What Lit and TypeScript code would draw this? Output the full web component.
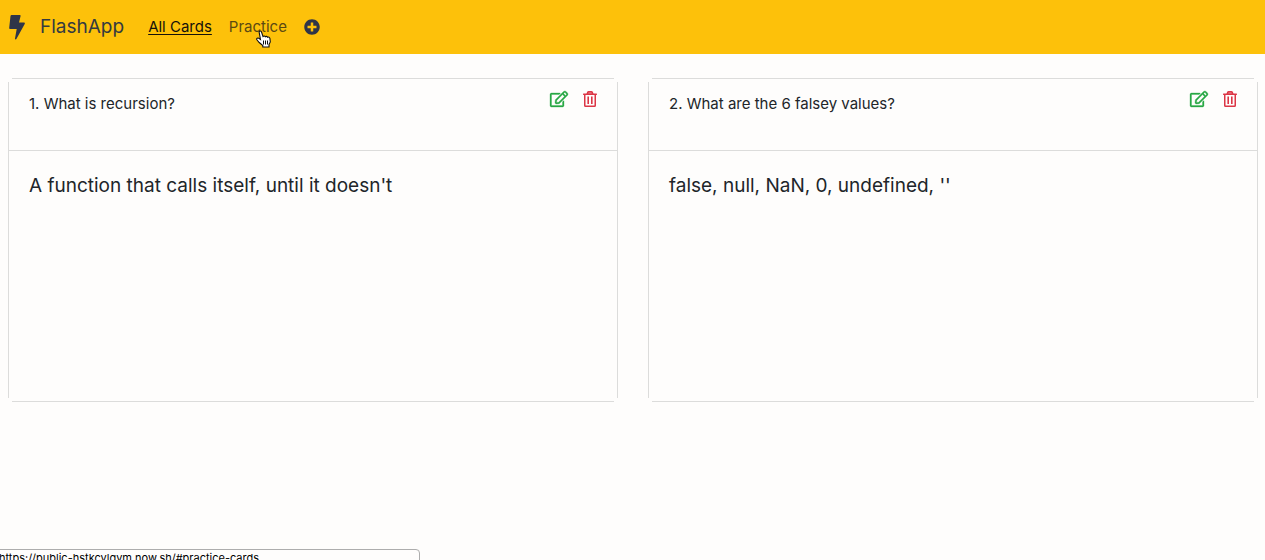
import { LitElement, html, css } from "lit";
import { customElement, property, state } from "lit/decorators.js";

interface Card {
  question: string;
  answer: string;
}

const boltIcon = html`<svg class="bolt" viewBox="0 0 16 26" aria-hidden="true">
  <path d="M2.600 1h8.100c.7 0 1.100.5.9 1.100L10 8.500h4.900c.8 0 1.200.8.8 1.500L7.400 25c-.4.7-1.600.4-1.400-.5l1.700-9.500H1.300c-.7 0-1.200-.5-1.100-1.200L1.500 1.900C1.600 1.400 2 1 2.600 1z"/>
</svg>`;

const plusIcon = html`<svg class="plus" viewBox="0 0 512 512" aria-hidden="true">
  <path d="M256 8C119 8 8 119 8 256s111 248 248 248 248-111 248-248S393 8 256 8zm144 276c0 6.600-5.400 12-12 12h-92v92c0 6.600-5.400 12-12 12h-56c-6.600 0-12-5.400-12-12v-92h-92c-6.600 0-12-5.400-12-12v-56c0-6.600 5.400-12 12-12h92v-92c0-6.600 5.400-12 12-12h56c6.600 0 12 5.400 12 12v92h92c6.600 0 12 5.400 12 12v56z"/>
</svg>`;

const editIcon = html`<svg class="edit-icon" viewBox="0 0 576 512" aria-hidden="true">
  <path d="M402.3 344.9l32-32c5-5 13.7-1.5 13.7 5.7V464c0 26.5-21.5 48-48 48H48c-26.5 0-48-21.5-48-48V112c0-26.5 21.5-48 48-48h273.5c7.1 0 10.7 8.6 5.7 13.7l-32 32c-1.5 1.5-3.5 2.3-5.7 2.3H48v352h352V350.5c0-2.1.8-4.1 2.3-5.6zm156.6-201.8L296.3 405.7l-90.4 10c-26.2 2.9-48.5-19.2-45.6-45.6l10-90.4L432.900 17.100c22.900-22.900 59.900-22.900 82.700 0l43.200 43.200c22.900 22.900 22.900 60 .1 82.800zM460.100 174L402 115.900 216.200 301.800l-7.300 65.300 65.300-7.300L460.100 174zm64.800-79.700l-43.200-43.200c-4.100-4.100-10.800-4.100-14.800 0L436 82l58.100 58.100 30.900-30.900c4-4.200 4-10.800-.1-14.900z"/>
</svg>`;

const trashIcon = html`<svg class="trash-icon" viewBox="0 0 14 16" aria-hidden="true">
  <path d="M4.200.8 3.500 2.500H.5a.5.5 0 0 0-.5.5v.5c0 .3.2.5.5.5H1v10.500A1.500 1.500 0 0 0 2.500 16h9a1.500 1.500 0 0 0 1.500-1.500V4h.5c.3 0 .5-.2.5-.5V3a.5.5 0 0 0-.5-.5h-3L9.800.8A1.500 1.500 0 0 0 8.500 0h-3a1.500 1.500 0 0 0-1.300.8zM2.500 4h9v10.500h-9zM4.400 5.500h1.600v7.500H4.400zM8 5.500h1.600v7.500H8z" fill-rule="evenodd"/>
  <path class="lid" d="M5.200 2.500l.4-1h2.800l.4 1z"/>
</svg>`;

@customElement("flash-card")
class FlashCard extends LitElement {
  @property({ type: Number }) number = 0;
  @property() question = "";
  @property() answer = "";

  static styles = css`
    :host {
      --line: linear-gradient(#dcdcdb, #dcdcdb);
      display: flex;
      flex-direction: column;
      padding: 1px;
      background:
        var(--line) top / calc(100% - 8px) 1px no-repeat,
        var(--line) bottom / calc(100% - 8px) 1px no-repeat,
        var(--line) left / 1px calc(100% - 8px) no-repeat,
        var(--line) right / 1px calc(100% - 8px) no-repeat;
    }
    .header {
      display: flex;
      align-items: flex-start;
      gap: 12px;
      padding: 12px 20px;
      min-height: 47px;
      border-bottom: 1px solid #dcdcdb;
    }
    .question {
      flex: 1;
      margin: 0;
      font-size: 15px;
      line-height: 26px;
      font-weight: 400;
    }
    .actions {
      display: flex;
      gap: 15px;
    }
    button {
      display: flex;
      padding: 0;
      border: 0;
      background: none;
      cursor: pointer;
    }
    .edit-icon {
      width: 18px;
      height: 16px;
      fill: #28a745;
      stroke: #28a745;
      stroke-width: 10;
      overflow: visible;
    }
    .trash-icon {
      width: 14px;
      height: 16px;
      fill: #dc3545;
    }
    .lid {
      fill: #e88c95;
    }
    .answer {
      margin: 0;
      padding: 20px;
      min-height: 210px;
      font-size: 19px;
      line-height: 30px;
    }
  `;

  render() {
    return html`
      <header class="header">
        <h2 class="question">${this.number}. ${this.question}</h2>
        <div class="actions">
          <button type="button" aria-label="Edit card">${editIcon}</button>
          <button type="button" aria-label="Delete card">${trashIcon}</button>
        </div>
      </header>
      <p class="answer">${this.answer}</p>
    `;
  }
}

@customElement("app-root")
class AppRoot extends LitElement {
  @state() private cards: Card[] = [
    { question: "What is recursion?", answer: "A function that calls itself, until it doesn't" },
    { question: "What are the 6 falsey values?", answer: "false, null, NaN, 0, undefined, ''" },
  ];

  static styles = css`
    :host {
      display: block;
      position: relative;
      min-height: 100vh;
      overflow: hidden;
      background: #fefdfc;
      color: #212529;
      font-family: Inter, "Liberation Sans", sans-serif;
    }
    .navbar {
      display: flex;
      align-items: center;
      height: 54px;
      padding: 0 9px;
      background: #fdc10a;
    }
    .brand {
      display: flex;
      align-items: center;
      gap: 15px;
      margin-right: 24px;
      color: #343a40;
      font-size: 19px;
      line-height: 30px;
      text-decoration: none;
    }
    .bolt {
      width: 16px;
      height: 26px;
      fill: #2f3548;
    }
    .links {
      display: flex;
      align-items: center;
      gap: 17px;
      font-size: 15px;
      line-height: 24px;
    }
    .link {
      color: #5c4912;
      text-decoration: none;
    }
    .link.active {
      color: #16120a;
      text-decoration: underline;
      text-underline-offset: 2px;
    }
    .add {
      display: flex;
      padding: 0;
      border: 0;
      background: none;
    }
    .plus {
      width: 16px;
      height: 16px;
      fill: #2f3548;
    }
    .deck {
      display: grid;
      grid-template-columns: 1fr 1fr;
      gap: 30px;
      padding: 24px 7px 24px 8px;
    }
    .pointer {
      position: absolute;
      left: 256px;
      top: 30px;
      width: 16px;
      height: 18px;
    }
    .status {
      position: absolute;
      left: -4px;
      top: 549px;
      box-sizing: border-box;
      width: 424px;
      height: 20px;
      padding: 0 2px;
      border: 1px solid #adadad;
      border-radius: 4px;
      color: #000;
      font-size: 11px;
      line-height: 16px;
      white-space: nowrap;
    }
  `;

  render() {
    return html`
      <nav class="navbar">
        <a class="brand" href="#">${boltIcon}<span>FlashApp</span></a>
        <div class="links">
          <a class="link active" href="#all-cards">All Cards</a>
          <a class="link" href="#practice-cards">Practice</a>
          <button class="add" type="button" aria-label="Add card">${plusIcon}</button>
        </div>
      </nav>
      <main class="deck">
        ${this.cards.map(
          (card, i) => html`<flash-card .number=${i + 1} .question=${card.question} .answer=${card.answer}></flash-card>`
        )}
      </main>
      <svg class="pointer" viewBox="0 0 16 18" aria-hidden="true">
        <path d="M4.500 9.500 3.200 2.500C2.900.8 5 .4 5.500 2L7 6.500c.8-.8 1.900-.6 2.300.2.800-.6 1.900-.4 2.200.5 1-.5 2.200.1 2.400 1.200l.4 3.600-1.300 2.500v2.500H6.800v-1.500L3.200 12.500.9 9.800C.2 8.500 1.700 7.500 2.800 8.300z" fill="#fff" stroke="#111" stroke-width="1.100"/>
        <path d="M7.500 10.500v4M9.500 10.500v4M11.500 10.500v4" stroke="#111" fill="none"/>
      </svg>
      <div class="status">https://public-hstkcylgym.now.sh/#practice-cards</div>
    `;
  }
}
